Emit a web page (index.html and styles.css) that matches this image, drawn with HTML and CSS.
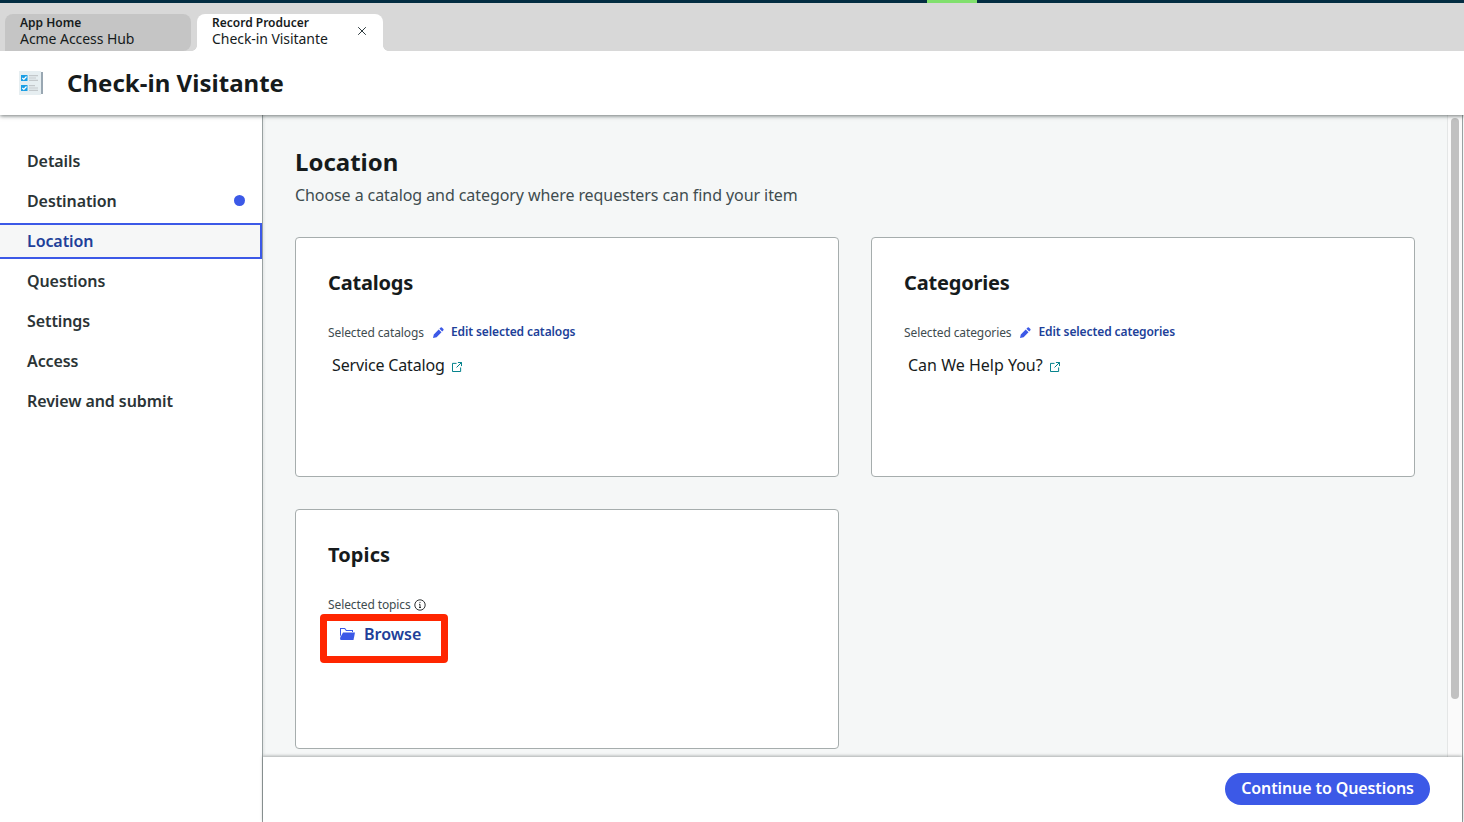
FILE: index.html
```html
<!DOCTYPE html>
<html lang="en">
<head>
<meta charset="utf-8">
<title>Check-in Visitante</title>
<link rel="stylesheet" href="styles.css">
</head>
<body>
<div class="app">
  <div class="loadbar"><span class="loadbar-chunk"></span></div>
  <div class="tabs">
    <div class="tab"><div class="tab-text"><strong>App Home</strong><span>Acme Access Hub</span></div></div>
    <div class="tab tab-active">
      <div class="tab-text"><strong>Record Producer</strong><span>Check-in Visitante</span></div>
      <svg class="close" viewBox="0 0 8 8"><path d="M.2.2l7.600 7.600M7.800.2L.2 7.800"/></svg>
    </div>
  </div>
  <header class="header">
    <svg class="form-icon" viewBox="0 0 24 24">
      <path fill="#e6eef1" d="M0 0h22v24H0z"/><path fill="#8798a5" d="M22 1h2v22h-2z" opacity=".85"/>
      <path fill="#1b9ee4" d="M2 4h6.500v6H2zM2 14h6.500v6H2z"/>
      <path fill="none" stroke="#fff" stroke-width="1.200" d="M3.300 7l1.500 1.500L7.500 5.500M3.300 17l1.500 1.500L7.500 15.500"/>
      <path stroke="#c3c8cb" stroke-width="1.200" d="M10 4.600h9M10 7h7M10 9.400h9M10 14.600h6M10 17h9M10 19.400h9"/>
    </svg>
    <h1 class="title">Check-in Visitante</h1>
  </header>
  <div class="body">
    <nav class="nav">
      <a class="nav-item">Details</a>
      <a class="nav-item">Destination<i class="dot"></i></a>
      <a class="nav-item nav-current">Location</a>
      <a class="nav-item">Questions</a>
      <a class="nav-item">Settings</a>
      <a class="nav-item">Access</a>
      <a class="nav-item">Review and submit</a>
    </nav>
    <main class="main">
      <div class="scroll-row">
        <div class="content">
          <h2 class="heading">Location</h2>
          <p class="lead">Choose a catalog and category where requesters can find your item</p>
          <div class="cards">
            <section class="card">
              <h3 class="card-title">Catalogs</h3>
              <div class="meta"><span class="label">Selected catalogs</span>
                <svg class="pencil" viewBox="0 0 12 12"><path d="M1 11l.8-3.600L6.700 2.500l2.800 2.800-4.900 4.900zM7.400 1.800L8.700.6q.6-.5 1.200 0l1.500 1.500q.5.6 0 1.200l-1.200 1.300z"/></svg>
                <a class="edit">Edit selected catalogs</a></div>
              <div class="value"><span class="catalog-name">Service Catalog</span>
                <svg class="external" viewBox="0 0 11 11"><path d="M5 1.500H.5v9h9V6M6.500.5h4v4M10.500.5L5 6"/></svg></div>
            </section>
            <section class="card">
              <h3 class="card-title">Categories</h3>
              <div class="meta"><span class="label">Selected categories</span>
                <svg class="pencil" viewBox="0 0 12 12"><path d="M1 11l.8-3.600L6.700 2.500l2.800 2.800-4.900 4.900zM7.400 1.800L8.700.6q.6-.5 1.200 0l1.500 1.500q.5.6 0 1.200l-1.200 1.300z"/></svg>
                <a class="edit">Edit selected categories</a></div>
              <div class="value"><span>Can We Help You?</span>
                <svg class="external" viewBox="0 0 11 11"><path d="M5 1.500H.5v9h9V6M6.500.5h4v4M10.500.5L5 6"/></svg></div>
            </section>
            <section class="card">
              <h3 class="card-title card-title-topics">Topics</h3>
              <div class="meta"><span class="label">Selected topics</span>
                <svg class="info" viewBox="0 0 12 12"><circle cx="6" cy="6" r="5.200"/><path d="M5 5.300h1v3.200M5 8.500h2M5.500 3.400h1"/></svg></div>
              <div class="browse-wrap"><a class="browse">
                <svg class="folder" viewBox="0 0 15 12"><path d="M0 0h5l1.500 2H13v2h-1V3H6L4.500 1H1v6L0 9z"/><path d="M3 4.500h12L13.500 12H.5L0 10z"/></svg>
                <span>Browse</span></a></div>
            </section>
          </div>
        </div>
        <div class="scrollbar"><div class="thumb"></div></div>
      </div>
      <footer class="footer"><button class="continue">Continue to Questions</button></footer>
    </main>
    <div class="edge"></div>
  </div>
</div>
</body>
</html>
```
FILE: styles.css
```css
* { box-sizing: border-box; }
body { margin: 0; font-family: "Noto Sans", sans-serif; color: #161b1c; background: #fff; overflow: hidden; }
h1, h2, h3, p { margin: 0; }
svg { flex: none; }
.app { height: 822px; display: flex; flex-direction: column; }
.loadbar { height: 3px; flex: none; background: #032d42; padding-left: 927px; }
.loadbar-chunk { display: block; width: 50px; height: 3px; background: #81e06d; }
.tabs { height: 48px; flex: none; background: #d8d8d8; padding: 11px 0 0 5px; display: flex; gap: 6px; }
.tab { width: 186px; height: 37px; padding: 0 17px 0 15px; background: #c5c5c5; border-radius: 8px 8px 8px 0; display: flex; justify-content: space-between; }
.tab-active { background: #fff; border-radius: 8px 8px 0 0; position: relative; }
.tab-active::before, .tab-active::after { content: ""; position: absolute; bottom: 0; width: 5px; height: 5px; }
.tab-active::before { left: -5px; background: radial-gradient(circle at 0 0, transparent 4.500px, #fff 5px); }
.tab-active::after { right: -5px; background: radial-gradient(circle at 100% 0, transparent 4.500px, #fff 5px); }
.tab-text { display: flex; flex-direction: column; white-space: nowrap; }
.tab-text strong { font-size: 12px; line-height: 17px; font-weight: 600; }
.tab-text span { font-size: 14px; line-height: 16px; letter-spacing: -.06px; }
.close { width: 8px; height: 8px; margin-top: 13px; stroke: #2e3a3e; fill: none; stroke-width: 1; }
.header { height: 64px; flex: none; display: flex; align-items: center; padding-left: 19px; gap: 24px; background: #fff; position: relative; z-index: 2; box-shadow: 0 1px 4px rgba(20,30,30,.6); clip-path: inset(0 0 -8px 0); }
.form-icon { width: 24px; height: 24px; }
.title { font-size: 24px; line-height: 32px; font-weight: 700; letter-spacing: .03px; }
.body { flex: 1; min-height: 0; display: flex; }
.nav { width: 262px; padding-top: 28px; display: flex; flex-direction: column; gap: 4px; }
.nav-item { height: 36px; padding: 0 17px 0 27px; display: flex; align-items: center; justify-content: space-between; font-size: 16px; font-weight: 600; letter-spacing: -.09px; color: #2b3436; }
.nav-current { background: #f6f7f7; color: #213f99; border: 2px solid #3c59e7; border-left: 0; }
.dot { width: 11px; height: 11px; margin-bottom: 2px; border-radius: 50%; background: #3c59e7; }
.main { flex: 1; min-width: 0; display: flex; flex-direction: column; border-left: 1px solid #99a1a1; }
.scroll-row { flex: 1; min-height: 0; display: flex; background: linear-gradient(90deg, #e4e7e7, #f5f7f7 3px); }
.content { flex: 1; padding: 31px 32px 0; }
.heading { font-size: 24px; line-height: 32px; font-weight: 700; }
.lead { font-size: 16px; line-height: 24px; margin-top: 5px; letter-spacing: -.08px; color: #404c4f; }
.cards { display: grid; grid-template-columns: 544px 544px; grid-auto-rows: 240px; gap: 32px; margin-top: 30px; }
.card { background: #fff; border: 1px solid #a6adad; border-radius: 4px; padding: 31px 32px 0; }
.card-title { font-size: 20px; line-height: 28px; font-weight: 700; letter-spacing: -.18px; }
.card-title-topics { letter-spacing: .1px; }
.meta { display: flex; align-items: center; height: 18px; margin-top: 26px; font-size: 12px; letter-spacing: -.1px; }
.label { color: #404c4f; }
.pencil { width: 12px; height: 12px; margin: 2px 7px 0 8px; fill: #3c59e7; }
.edit { font-weight: 600; color: #213f99; margin-top: -2px; }
.value { display: flex; align-items: center; gap: 7px; height: 24px; margin: 12px 0 0 4px; font-size: 16px; }
.catalog-name { letter-spacing: -.15px; }
.external { width: 10px; height: 10px; margin-top: 4px; fill: none; stroke: #00808a; stroke-width: 1.100; }
.info { width: 12px; height: 12px; margin: 1px 0 0 3px; fill: none; stroke: #161b1c; stroke-width: .9; }
.browse-wrap { width: 128px; height: 49px; margin: 1px 0 0 -8px; border: 7px solid #ff2600; border-radius: 4px; padding: 1px 0 0 13px; }
.browse { display: flex; align-items: center; gap: 9px; height: 24px; font-size: 16px; font-weight: 600; color: #213f99; }
.folder { width: 15px; height: 12px; fill: #3c59e7; }
.scrollbar { width: 15px; background: #fafafa; border-left: 1px solid #e4e6e6; padding: 3px 0 0 3px; }
.thumb { width: 8px; height: 581px; border-radius: 4px; background: #c1c1c1; }
.footer { height: 65px; flex: none; background: #fff; position: relative; display: flex; justify-content: flex-end; padding: 16px 32px 0 0; box-shadow: 0 -1px 3px rgba(20,30,30,.35); }
.continue { width: 205px; height: 32px; border: 0; border-radius: 16px; background: #3c59e7; color: #fff; font: 600 16px/30px "Noto Sans", sans-serif; letter-spacing: -.1px; padding: 0 0 2px; white-space: nowrap; }
.edge { width: 2px; border-left: 1px solid #99a1a1; background: #f5f7f7; }
```
